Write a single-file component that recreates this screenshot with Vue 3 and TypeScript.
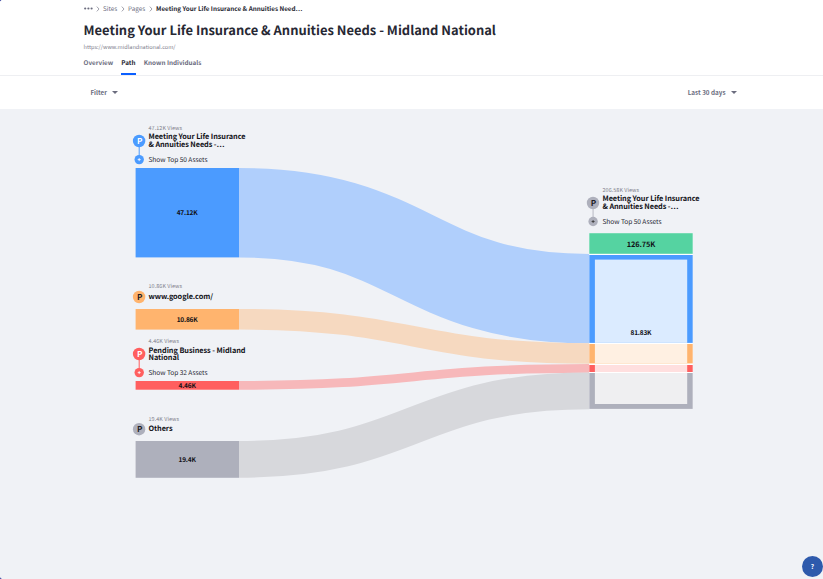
<script setup lang="ts">
interface SourceNode {
  id: string
  color: string
  linkColor: string
  y: number
  height: number
  targetY: number
  views: string
  viewsWidth: number
  viewsY: number
  value: string
  valueWidth: number
  labelY: number
  lines: { text: string; width: number }[]
  badgeY: number
  badgeInk: string
  assets?: string
}

const sources: SourceNode[] = [
  { id: 'midland', color: '#4b9bff', linkColor: '#b0cffc', y: 168, height: 89.4, targetY: 298.6, views: '47.12K Views', viewsWidth: 33.5, viewsY: 130.2, value: '47.12K', valueWidth: 21, labelY: 139.4, lines: [{ text: 'Meeting Your Life Insurance', width: 97 }, { text: '& Annuities Needs -…', width: 76 }], badgeY: 141, badgeInk: '#ffffff', assets: 'Show Top 50 Assets' },
  { id: 'google', color: '#ffb46e', linkColor: '#f6d9c0', y: 309, height: 20.6, targetY: 353.5, views: '10.86K Views', viewsWidth: 33.5, viewsY: 288.4, value: '10.86K', valueWidth: 21, labelY: 298.7, lines: [{ text: 'www.google.com/', width: 64.5 }], badgeY: 297, badgeInk: '#1c1c24' },
  { id: 'pending', color: '#ff5f5f', linkColor: '#f7b8ba', y: 381, height: 8.7, targetY: 368.3, views: '4.46K Views', viewsWidth: 30.5, viewsY: 343.4, value: '4.46K', valueWidth: 17.5, labelY: 352.5, lines: [{ text: 'Pending Business - Midland', width: 97 }, { text: 'National', width: 30.5 }], badgeY: 354, badgeInk: '#ffffff', assets: 'Show Top 32 Assets' },
  { id: 'others', color: '#aeb0bc', linkColor: '#d7d8dc', y: 441, height: 36.8, targetY: 390.9, views: '19.4K Views', viewsWidth: 30.5, viewsY: 420.6, value: '19.4K', valueWidth: 17.5, labelY: 430.8, lines: [{ text: 'Others', width: 24 }], badgeY: 429.2, badgeInk: '#1c1c24' },
]

const linkPath = (n: SourceNode): string => {
  const y = n.y + n.height / 2
  return `M239,${y} C414,${y} 414,${n.targetY} 589.3,${n.targetY}`
}
</script>

<template>
  <div class="page">
    <header class="header">
      <nav class="crumbs">
        <svg class="dots" viewBox="0 0 9 3"><circle cx="1.2" cy="1.5" r="1.1" /><circle cx="4.4" cy="1.5" r="1.1" /><circle cx="7.6" cy="1.5" r="1.1" /></svg>
        <svg class="chevron" viewBox="0 0 4 6"><path d="M.8.6 3 3 .8 5.4" /></svg>
        <a class="sites">Sites</a>
        <svg class="chevron" viewBox="0 0 4 6"><path d="M.8.6 3 3 .8 5.4" /></svg>
        <a class="pages">Pages</a>
        <svg class="chevron" viewBox="0 0 4 6"><path d="M.8.6 3 3 .8 5.4" /></svg>
        <b>Meeting Your Life Insurance &amp; Annuities Need…</b>
      </nav>
      <h1>Meeting Your Life Insurance &amp; Annuities Needs - Midland National</h1>
      <p class="url">https://www.midlandnational.com/</p>
      <nav class="tabs">
        <a class="overview">Overview</a>
        <a class="active">Path</a>
        <a class="known">Known Individuals</a>
      </nav>
    </header>
    <div class="toolbar">
      <button class="filter">Filter <i class="caret"></i></button>
      <button class="range">Last 30 days <i class="caret"></i></button>
    </div>
    <main class="canvas">
      <svg class="chart" viewBox="0 109 823 470" width="823" height="470">
        <path v-for="n in sources" :key="`link-${n.id}`" :d="linkPath(n)" fill="none" :stroke="n.linkColor" :stroke-width="n.height" />

        <g v-for="n in sources" :key="n.id">
          <rect x="135.6" :y="n.y" width="103.4" :height="n.height" :fill="n.color" />
          <text class="value" x="187.2" :y="n.y + n.height / 2 + 2.6" :textLength="n.valueWidth" text-anchor="middle">{{ n.value }}</text>
          <text class="views" x="148.5" :y="n.viewsY" :textLength="n.viewsWidth">{{ n.views }}</text>
          <text v-for="(line, i) in n.lines" :key="i" class="name" x="148.5" :y="n.labelY + i * 7.2" :textLength="line.width">{{ line.text }}</text>
          <path v-if="n.assets" :d="`M139.2,${n.badgeY}v18.6`" :stroke="n.color" stroke-width="1" />
          <circle cx="139.1" :cy="n.badgeY" r="6.2" :fill="n.color" />
          <text class="badge" x="139.7" :y="n.badgeY + 2.8" text-anchor="middle" :fill="n.badgeInk">P</text>
          <template v-if="n.assets">
            <circle cx="139.2" :cy="n.badgeY + 18.6" r="4.7" :fill="n.color" />
            <path :d="`M137.7,${n.badgeY + 18.6}h3M139.2,${n.badgeY + 17.1}v3`" stroke="#fff" stroke-width=".8" />
            <text class="assets" x="148.5" :y="n.badgeY + 21.2" textLength="59">{{ n.assets }}</text>
          </template>
        </g>

        <text class="views" x="602.5" y="192.1" textLength="36.5">206.58K Views</text>
        <text class="name" x="602.5" y="201.3" textLength="97">Meeting Your Life Insurance</text>
        <text class="name" x="602.5" y="208.5" textLength="76">&amp; Annuities Needs -…</text>
        <path d="M593.1,203v18.6" stroke="#c8c9d2" stroke-width="1.4" />
        <circle cx="593" cy="203" r="6.2" fill="#aeb0bc" />
        <text class="badge" x="593.6" y="205.8" text-anchor="middle" fill="#1c1c24">P</text>
        <circle cx="593.1" cy="221.5" r="4.7" fill="#aeb0bc" />
        <path d="M591.6,221.5h3M593.1,220v3" stroke="#333" stroke-width=".8" />
        <text class="assets" x="602.5" y="224.1" textLength="59">Show Top 50 Assets</text>

        <rect x="589.3" y="233.2" width="103.4" height="175.7" fill="#fff" />
        <rect x="589.3" y="233.2" width="103.4" height="20.6" fill="#55d3a1" />
        <text class="value total" x="641" y="247.3" textLength="28.5" text-anchor="middle">126.75K</text>
        <rect x="589.3" y="255" width="103.4" height="87.9" fill="#4b9bff" />
        <rect x="594.9" y="259.6" width="92.3" height="83.3" fill="#dbebff" />
        <rect x="589.3" y="344" width="103.4" height="19.4" fill="#ffb46e" />
        <rect x="594.9" y="344" width="92.3" height="19.4" fill="#fff0e2" />
        <rect x="589.3" y="365" width="103.4" height="7" fill="#ff5f5f" />
        <rect x="594.9" y="365" width="92.3" height="7" fill="#ffdfdf" />
        <rect x="589.3" y="373" width="103.4" height="35.9" fill="#aeb0bc" />
        <rect x="594.9" y="373" width="92.3" height="31" fill="#efeff1" />
        <text class="value" x="641" y="334.6" textLength="21" text-anchor="middle">81.83K</text>
      </svg>
      <button class="help">?</button>
    </main>
  </div>
</template>

<style>
body { margin: 0; overflow: hidden; background: #17228f; }
</style>

<style scoped>
.page {
  width: 823px;
  height: 579px;
  display: flex;
  flex-direction: column;
  overflow: hidden;
  border-radius: 2.5px 0 0 2.5px;
  background: #f0f2f6;
  font-family: "Noto Sans CJK SC", "Open Sans", sans-serif;
  color: #6b6c7e;
  text-rendering: geometricPrecision;
}
button { border: 0; padding: 0; font-family: inherit; color: inherit; background: none; }
.header {
  box-sizing: border-box;
  height: 76px;
  padding: 4px 0 0 83.6px;
  display: flex;
  flex-direction: column;
  background: #fff;
  border-bottom: 1px solid #eeeff2;
  white-space: nowrap;
}
.crumbs { display: flex; align-items: center; height: 9px; font-size: 6.3px; line-height: 9px; }
.crumbs b { color: #272833; margin-left: 3px; }
.dots { width: 9px; height: 3px; fill: #6b6c7e; }
.chevron { width: 4px; height: 6px; fill: none; stroke: #8a8b99; stroke-width: .8; }
.dots + .chevron { margin-left: 3.5px; }
.sites { width: 15px; margin: 0 3.2px 0 2.8px; }
.pages { width: 17.5px; margin: 0 3.5px 0 3px; }
h1 { margin: 7px 0 0; height: 20px; font-size: 12.93px; line-height: 20px; font-weight: 700; color: #272833; }
.url { margin: 2px 0 0; height: 10px; font-size: 5.55px; line-height: 10px; color: #7d7e8c; }
.tabs { display: flex; gap: 8.2px; margin-top: 5px; height: 18px; font-size: 6.3px; line-height: 11px; font-weight: 700; }
.tabs .active { color: #272833; border-bottom: 2px solid #0b5fff; height: 16px; }
.toolbar {
  box-sizing: border-box;
  height: 33px;
  padding: 0 86.5px 0 90.4px;
  display: flex;
  justify-content: space-between;
  align-items: center;
  background: #fff;
}
.toolbar button { display: flex; align-items: center; gap: 5px; font-size: 6.3px; line-height: 12px; font-weight: 700; }
.caret { width: 0; height: 0; border: 3px solid transparent; border-top-color: #6b6c7e; border-bottom: 0; }
.canvas { position: relative; height: 470px; }
.chart { display: block; }
.value { font-size: 6.5px; font-weight: 700; fill: #111116; }
.total { font-size: 7.4px; }
.views { font-size: 5.4px; fill: #7d7e89; }
.name { font-size: 7.3px; font-weight: 700; fill: #111116; }
.assets { font-size: 6.6px; fill: #272833; }
.badge { font-size: 8.2px; font-weight: 700; }
.help {
  position: absolute;
  right: 0;
  bottom: 2px;
  width: 21px;
  height: 21px;
  border-radius: 50%;
  background: #2e5aac;
  color: #fff;
  font-size: 6.5px;
  line-height: 21px;
  font-weight: 700;
}
</style>
